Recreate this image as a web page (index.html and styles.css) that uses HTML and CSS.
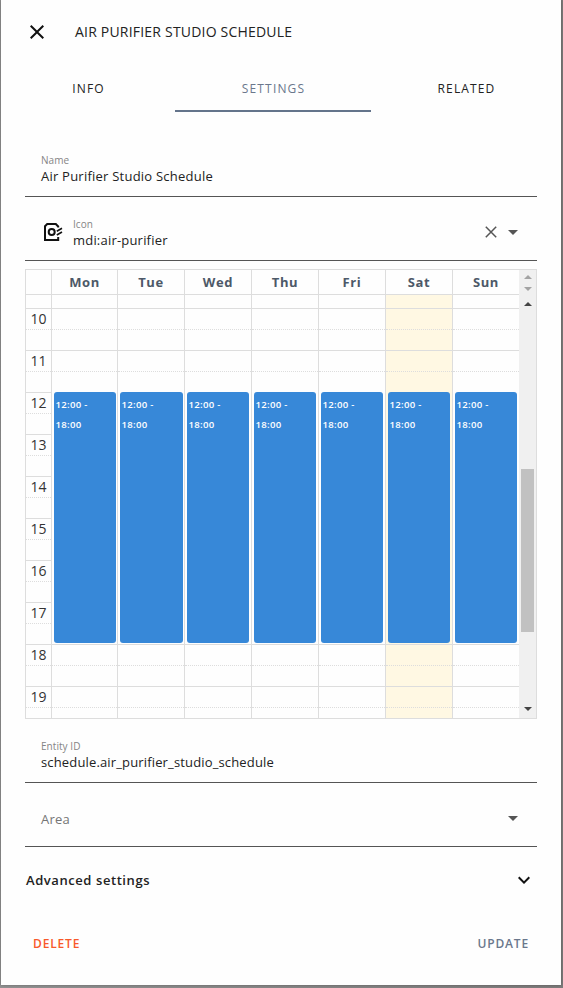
FILE: index.html
```html
<!DOCTYPE html>
<html lang="en">
<head>
<meta charset="utf-8">
<title>Air Purifier Studio Schedule</title>
<link rel="stylesheet" href="styles.css">
</head>
<body>
<main class="dialog">
  <header class="header">
    <svg class="icon" viewBox="0 0 24 24"><path d="M19 6.41 17.59 5 12 10.59 6.41 5 5 6.41 10.59 12 5 17.59 6.41 19 12 13.41 17.59 19 19 17.59 13.41 12z"/></svg>
    <h1 class="title"><span>AIR PURIFIER STUDIO SCHEDULE</span></h1>
  </header>
  <nav class="tabs">
    <div class="tab"><span>INFO</span></div>
    <div class="tab tab-active"><span>SETTINGS</span></div>
    <div class="tab"><span>RELATED</span></div>
  </nav>
  <section class="field">
    <div class="field-text"><label class="label">Name</label><div class="value value-name">Air Purifier Studio Schedule</div></div>
  </section>
  <section class="field field-icon">
    <svg class="icon purifier" viewBox="0 0 24 24"><path d="M17.2 7.4V6.5L14.8 4H6.2L4 6.2V20h13.2v-3"/><circle cx="10.7" cy="12" r="3"/><path class="vents" d="M15.8 11.2 21 8.3M15.8 15 21 12.1"/></svg>
    <div class="field-text"><label class="label">Icon</label><div class="value value-icon">mdi:air-purifier</div></div>
    <svg class="clear" viewBox="0 0 12 12"><path d="M.8.8 11.2 11.2M11.2.8.8 11.2"/></svg>
    <i class="caret"></i>
  </section>
  <section class="calendar">
    <div class="cal-main">
      <div class="cal-head">
        <div class="axis"></div><div>Mon</div><div>Tue</div><div>Wed</div><div>Thu</div><div>Fri</div><div>Sat</div><div>Sun</div>
      </div>
      <div class="cal-body" id="body"></div>
    </div>
    <div class="scroll">
      <i class="arrow up pale first"></i><i class="arrow down pale second"></i><i class="arrow up third"></i>
      <div class="thumb"></div>
      <i class="arrow down last"></i>
    </div>
  </section>
  <section class="field field-entity">
    <div class="field-text"><label class="label">Entity ID</label><div class="value value-entity">schedule.air_purifier_studio_schedule</div></div>
  </section>
  <section class="field field-area">
    <div class="placeholder">Area</div>
    <i class="caret"></i>
  </section>
  <section class="advanced">
    <span>Advanced settings</span>
    <svg class="icon" viewBox="0 0 24 24"><path d="M7.41 8.58 12 13.17l4.59-4.59L18 10l-6 6-6-6z"/></svg>
  </section>
  <footer class="footer">
    <span class="delete">DELETE</span><span class="update">UPDATE</span>
  </footer>
</main>
<script src="calendar.js"></script>
</body>
</html>
```
FILE: calendar.js
```js
const body = document.getElementById("body");
const add = (parent, cls, text) => {
  const el = document.createElement("div");
  el.className = cls;
  if (text) el.textContent = text;
  parent.append(el);
  return el;
};
for (let day = 0; day <= 7; day++) {
  const col = add(body, day === 0 ? "col axis" : day === 6 ? "col today" : "col");
  add(col, "lead");
  for (let hour = 10; hour < 20; hour++) {
    add(col, "slot", day === 0 ? String(hour) : "");
    add(col, "slot half");
  }
  if (day > 0) add(col, "event", "12:00 - 18:00");
}
```
FILE: styles.css
```css
* { box-sizing: border-box; }
body {
  margin: 0;
  height: 988px;
  overflow: hidden;
  background: linear-gradient(90deg, #929292, #7d7b7b);
  font-family: "Open Sans", "Noto Sans", sans-serif;
  color: #222;
}
.dialog {
  width: 560px;
  height: 985px;
  margin-left: 1px;
  padding: 0 24px;
  background: #fefefe;
  box-shadow: 0 0 3px rgba(0, 0, 0, .3);
}
.icon { width: 24px; height: 24px; flex: none; fill: #111; }
.header { display: flex; align-items: center; height: 64px; gap: 26px; }
.title { margin: 0; padding-bottom: 2px; font-size: 14px; font-weight: 400; letter-spacing: .2px; white-space: nowrap; }
.tabs { display: grid; grid-template-columns: 174px 196px 190px; height: 48px; margin: 0 -24px 28px; }
.tab { display: flex; align-items: center; justify-content: center; padding: 2px 0 0 1px; font-size: 12px; font-weight: 500; letter-spacing: 1.15px; border-bottom: 2px solid transparent; }
.tab-active { color: #6a778c; border-color: #64748b; }
.field { display: flex; align-items: center; height: 57px; padding: 0 16px; margin-bottom: 7px; border-bottom: 1px solid #555; }
.field-text { flex: 1; padding-top: 1px; }
.label { display: block; font-size: 10px; line-height: 14px; color: #858585; letter-spacing: .05px; }
.value { font-size: 13px; line-height: 18px; white-space: nowrap; letter-spacing: .15px; }
.value-name { letter-spacing: .23px; }
.value-icon { letter-spacing: .2px; }
.purifier { margin-right: 8px; fill: none; stroke: #111; stroke-width: 2; }
.vents { stroke-width: 1.7; }
.clear { width: 12px; height: 12px; fill: none; stroke: #555; stroke-width: 1.5; margin-right: 11px; }
.caret { width: 0; height: 0; border: 5px solid transparent; border-top-color: #555; border-bottom: 0; margin-right: 3px; }
.field-icon { margin-bottom: 8px; }
.calendar { display: flex; height: 450px; border: 1px solid #ddd; }
.cal-main { flex: 1; display: flex; flex-direction: column; overflow: hidden; }
.cal-head, .cal-body { display: grid; grid-template-columns: 25px 66px repeat(6, 67px); }
.cal-head { height: 25px; border-bottom: 1px solid #ddd; font-size: 13px; font-weight: 700; line-height: 25px; text-align: center; color: #4d5968; letter-spacing: .6px; }
.cal-head > :not(.axis) { border-left: 1px solid #ddd; }
.cal-body { flex: 1; overflow: hidden; }
.col { display: grid; grid-template-rows: 13px repeat(20, 21px); height: 433px; border-left: 1px solid #ddd; }
.col.axis { border-left: 0; font-size: 14px; text-align: center; color: #333; }
.slot { grid-column: 1; border-top: 1px solid #ddd; line-height: 20px; }
.half { border-top-style: dotted; }
.today { background: #fff8e3; }
.event {
  grid-column: 1;
  grid-row: 6 / span 12;
  margin: 0 1px 1px 2px;
  padding: 3px 16px 0 1.5px;
  border-radius: 3px;
  background: #3788d8;
  color: #fff;
  font-size: 9.6px;
  font-weight: 600;
  line-height: 20px;
  letter-spacing: .3px;
}
.col:nth-child(n + 4) .event { margin-right: 2px; }
.scroll { width: 17px; background: #f0f0f0; display: flex; flex-direction: column; align-items: center; }
.arrow { width: 0; height: 0; border: 4px solid transparent; flex: none; }
.up { border-top: 0; border-bottom-color: #444; }
.down { border-bottom: 0; border-top-color: #444; }
.up.pale { border-bottom-color: #a3a3a3; }
.down.pale { border-top-color: #a3a3a3; }
.first { margin-top: 5px; }
.second { margin-top: 8px; }
.third { margin-top: 11px; }
.thumb { width: 13px; height: 163px; margin: 163px 0 75px; background: #c1c1c1; }
.field-entity { margin-top: 7px; }
.placeholder { flex: 1; padding-top: 2px; font-size: 13px; letter-spacing: .2px; color: #757575; }
.advanced { display: flex; align-items: center; justify-content: space-between; height: 52px; padding: 0 1px; font-size: 13px; font-weight: 600; letter-spacing: .57px; }
.footer { display: flex; align-items: center; justify-content: space-between; margin-top: 19px; height: 36px; padding: 0 8px; font-size: 12px; font-weight: 600; letter-spacing: .85px; }
.delete { color: #f8592a; }
.update { color: #6a778c; }
```
